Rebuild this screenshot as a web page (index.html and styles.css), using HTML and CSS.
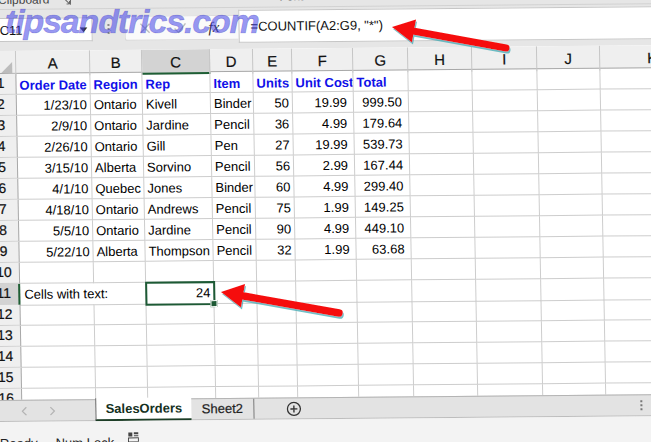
FILE: index.html
```html
<!DOCTYPE html>
<html>
<head>
<meta charset="utf-8">
<title>SalesOrders</title>
<link rel="stylesheet" href="styles.css">
</head>
<body>
<div class="app">
  <div class="ribbon">
    <span class="rb-clip">Clipboard</span>
    <svg class="rb-launch" width="8" height="8" viewBox="0 0 8 8"><path d="M0.5 0.5h7v7" fill="none" stroke="#666"/><path d="M1.5 1.5l5 5M3.5 6.5h3v-3" fill="none" stroke="#666"/></svg>
    <span class="rb-font">Font</span>
  </div>
  <div class="fbar">
    <div class="namebox"><span class="nb-text">C11</span><svg class="nb-dd" width="8" height="5" viewBox="0 0 8 5"><path d="M0 0h8L4 5z" fill="#333"/></svg></div>
    <div class="grip"><i></i><i></i><i></i></div>
    <div class="fbtns">
      <svg width="11" height="11" viewBox="0 0 11 11"><path d="M1 1l9 9M10 1l-9 9" stroke="#bdbdbd" stroke-width="1.4"/></svg>
      <svg width="13" height="11" viewBox="0 0 13 11"><path d="M1 6l4 4 7-9" fill="none" stroke="#bdbdbd" stroke-width="1.4"/></svg>
      <span class="fx">fx</span>
    </div>
    <div class="finput">=COUNTIF(A2:G9, "*")</div>
  </div>
  <div class="sheet">
    <div class="row hdr"><div class="corner"></div><div class="ch">A</div><div class="ch">B</div><div class="ch on">C</div><div class="ch">D</div><div class="ch">E</div><div class="ch">F</div><div class="ch">G</div><div class="ch">H</div><div class="ch">I</div><div class="ch">J</div><div class="ch">K</div></div>
    <div class="row"><div class="rh">1</div><div class="c t">Order Date</div><div class="c t">Region</div><div class="c t">Rep</div><div class="c t">Item</div><div class="c t">Units</div><div class="c t">Unit Cost</div><div class="c t">Total</div><div class="c"></div><div class="c"></div><div class="c"></div><div class="c"></div></div>
    <div class="row"><div class="rh">2</div><div class="c r">1/23/10</div><div class="c">Ontario</div><div class="c">Kivell</div><div class="c">Binder</div><div class="c r">50</div><div class="c r6">19.99</div><div class="c r6">999.50</div><div class="c"></div><div class="c"></div><div class="c"></div><div class="c"></div></div>
    <div class="row"><div class="rh">3</div><div class="c r">2/9/10</div><div class="c">Ontario</div><div class="c">Jardine</div><div class="c">Pencil</div><div class="c r">36</div><div class="c r6">4.99</div><div class="c r6">179.64</div><div class="c"></div><div class="c"></div><div class="c"></div><div class="c"></div></div>
    <div class="row"><div class="rh">4</div><div class="c r">2/26/10</div><div class="c">Ontario</div><div class="c">Gill</div><div class="c">Pen</div><div class="c r">27</div><div class="c r6">19.99</div><div class="c r6">539.73</div><div class="c"></div><div class="c"></div><div class="c"></div><div class="c"></div></div>
    <div class="row"><div class="rh">5</div><div class="c r">3/15/10</div><div class="c">Alberta</div><div class="c">Sorvino</div><div class="c">Pencil</div><div class="c r">56</div><div class="c r6">2.99</div><div class="c r6">167.44</div><div class="c"></div><div class="c"></div><div class="c"></div><div class="c"></div></div>
    <div class="row"><div class="rh">6</div><div class="c r">4/1/10</div><div class="c">Quebec</div><div class="c">Jones</div><div class="c">Binder</div><div class="c r">60</div><div class="c r6">4.99</div><div class="c r6">299.40</div><div class="c"></div><div class="c"></div><div class="c"></div><div class="c"></div></div>
    <div class="row"><div class="rh">7</div><div class="c r">4/18/10</div><div class="c">Ontario</div><div class="c">Andrews</div><div class="c">Pencil</div><div class="c r">75</div><div class="c r6">1.99</div><div class="c r6">149.25</div><div class="c"></div><div class="c"></div><div class="c"></div><div class="c"></div></div>
    <div class="row"><div class="rh">8</div><div class="c r">5/5/10</div><div class="c">Ontario</div><div class="c">Jardine</div><div class="c">Pencil</div><div class="c r">90</div><div class="c r6">4.99</div><div class="c r6">449.10</div><div class="c"></div><div class="c"></div><div class="c"></div><div class="c"></div></div>
    <div class="row"><div class="rh">9</div><div class="c r">5/22/10</div><div class="c">Alberta</div><div class="c">Thompson</div><div class="c">Pencil</div><div class="c r">32</div><div class="c r6">1.99</div><div class="c r6">63.68</div><div class="c"></div><div class="c"></div><div class="c"></div><div class="c"></div></div>
    <div class="row"><div class="rh">10</div><div class="c"></div><div class="c"></div><div class="c"></div><div class="c"></div><div class="c"></div><div class="c"></div><div class="c"></div><div class="c"></div><div class="c"></div><div class="c"></div><div class="c"></div></div>
    <div class="row"><div class="rh on">11</div><div class="c spill">Cells with text:</div><div class="c"></div><div class="c r sel">24</div><div class="c"></div><div class="c"></div><div class="c"></div><div class="c"></div><div class="c"></div><div class="c"></div><div class="c"></div><div class="c"></div></div>
    <div class="row"><div class="rh">12</div><div class="c"></div><div class="c"></div><div class="c"></div><div class="c"></div><div class="c"></div><div class="c"></div><div class="c"></div><div class="c"></div><div class="c"></div><div class="c"></div><div class="c"></div></div>
    <div class="row"><div class="rh">13</div><div class="c"></div><div class="c"></div><div class="c"></div><div class="c"></div><div class="c"></div><div class="c"></div><div class="c"></div><div class="c"></div><div class="c"></div><div class="c"></div><div class="c"></div></div>
    <div class="row"><div class="rh">14</div><div class="c"></div><div class="c"></div><div class="c"></div><div class="c"></div><div class="c"></div><div class="c"></div><div class="c"></div><div class="c"></div><div class="c"></div><div class="c"></div><div class="c"></div></div>
    <div class="row"><div class="rh">15</div><div class="c"></div><div class="c"></div><div class="c"></div><div class="c"></div><div class="c"></div><div class="c"></div><div class="c"></div><div class="c"></div><div class="c"></div><div class="c"></div><div class="c"></div></div>
    <div class="row"><div class="rh">16</div><div class="c"></div><div class="c"></div><div class="c"></div><div class="c"></div><div class="c"></div><div class="c"></div><div class="c"></div><div class="c"></div><div class="c"></div><div class="c"></div><div class="c"></div></div>
  </div>
  <div class="tabbar">
    <div class="nav">
      <svg width="6" height="9" viewBox="0 0 6 9"><path d="M5 0.5L1 4.5 5 8.5" fill="none" stroke="#b5b5b5" stroke-width="1.3"/></svg>
      <svg width="6" height="9" viewBox="0 0 6 9"><path d="M1 0.5L5 4.5 1 8.5" fill="none" stroke="#b5b5b5" stroke-width="1.3"/></svg>
    </div>
    <div class="tab active">SalesOrders</div>
    <div class="tab">Sheet2</div>
    <div class="add"><svg width="15" height="15" viewBox="0 0 15 15"><circle cx="7.5" cy="7.5" r="6.5" fill="none" stroke="#333" stroke-width="1.3"/><path d="M7.5 4v7M4 7.5h7" stroke="#333" stroke-width="1.4"/></svg></div>
    <div class="tb-fill"></div>
    <div class="vdots"><i></i><i></i><i></i></div>
    <div class="hscroll"></div>
  </div>
  <div class="status">
    <span class="st-ready">Ready</span>
    <span class="st-num">Num Lock</span>
    <svg class="st-icon" width="11" height="10" viewBox="0 0 11 10"><rect x="0.5" y="0.5" width="4" height="4" fill="#444"/><rect x="6" y="0.5" width="4.5" height="2" fill="#444"/><rect x="6" y="3.5" width="4.5" height="1" fill="#444"/><rect x="0.5" y="6" width="10" height="4" fill="none" stroke="#444"/></svg>
    <span class="st-fill"></span>
    <span class="st-view"></span>
  </div>
</div>
<div class="watermark">tipsandtrics.com</div>
<svg class="arrows" width="651" height="442" viewBox="0 0 651 442">
  <defs>
    <filter id="sh" x="-10%" y="-30%" width="120%" height="160%">
      <feDropShadow dx="1" dy="2" stdDeviation="0.7" flood-color="#3fa9b3" flood-opacity="0.75"/>
    </filter>
  </defs>
  <g filter="url(#sh)">
    <line x1="506" y1="48" x2="410" y2="30.5" stroke="#f5110f" stroke-width="7" stroke-linecap="round"/>
    <polygon points="392,27 416,19.5 412,42.5" fill="#f5110f"/>
    <line x1="339" y1="313" x2="242" y2="295.8" stroke="#f5110f" stroke-width="7.5" stroke-linecap="round"/>
    <polygon points="221,292 245,284 241,307.5" fill="#f5110f"/>
  </g>
</svg>
</body>
</html>
```

FILE: styles.css
```css
html, body {
  margin: 0;
  padding: 0;
}
body {
  width: 651px;
  height: 442px;
  overflow: hidden;
  position: relative;
  background: #e6e6e6;
  font-family: "Liberation Sans", Arial, sans-serif;
}

.app {
  margin-left: -16px;
  width: 720px;
  height: 470px;
  transform-origin: 16px 0;
  transform: matrix(1, -0.009, 0.018, 1, 0, 0);
  background: #e6e6e6;
  display: flex;
  flex-direction: column;
}

/* ribbon remnant */
.ribbon {
  height: 10px;
  overflow: hidden;
  display: flex;
  align-items: flex-start;
  font-size: 12px;
  color: #444;
  border-bottom: 1px solid #d2d2d2;
  box-sizing: border-box;
}
.rb-clip {
  margin-left: 14px;
  margin-top: -8px;
  line-height: 16px;
}
.rb-launch {
  margin-left: 14px;
  margin-top: -2px;
}
.rb-font {
  margin-left: 208px;
  margin-top: -9px;
  line-height: 16px;
}

/* formula bar */
.fbar {
  height: 41px;
  display: flex;
  align-items: flex-start;
}
.namebox {
  margin-top: 8px;
  width: 108px;
  height: 24px;
  box-sizing: border-box;
  background: #fff;
  border: 1px solid #c6c6c6;
  border-left: none;
  display: flex;
  align-items: center;
  font-size: 13px;
  color: #111;
}
.nb-text {
  margin-left: 15px;
}
.nb-dd {
  margin-left: auto;
  margin-right: 4px;
}
.grip {
  width: 32px;
  margin-top: 15px;
  display: flex;
  flex-direction: column;
  align-items: center;
  gap: 2px;
}
.grip i {
  width: 2px;
  height: 2px;
  background: #8a8a8a;
}
.fbtns {
  margin-top: 7px;
  width: 114px;
  height: 25px;
  box-sizing: border-box;
  background: #fafafa;
  border: 1px solid #d8d8d8;
  border-right: none;
  border-radius: 3px 0 0 3px;
  display: flex;
  align-items: center;
  padding-left: 14px;
  gap: 23px;
}
.fx {
  font-family: "Liberation Serif", serif;
  font-style: italic;
  font-size: 15px;
  color: #333;
  margin-left: -1px;
}
.finput {
  margin-top: 2px;
  flex: 1;
  height: 33px;
  box-sizing: border-box;
  background: #fff;
  border: 1px solid #c6c6c6;
  border-right: none;
  font-size: 13px;
  line-height: 20px;
  padding: 6px 0 0 11px;
  color: #111;
}

/* sheet */
.sheet {
  height: 349px;
  overflow: hidden;
  background: #fff;
}
.row {
  display: grid;
  grid-template-columns: 31px 74px 52px 68px 43px 39px 61px 55px 64px 65px 63px 105px;
  height: 21px;
}
.row.hdr {
  height: 23px;
  background: #efefef;
  border-bottom: 1px solid #a8a8a8;
  box-sizing: border-box;
}
.corner {
  position: relative;
  border-right: 1px solid #c8c8c8;
}
.corner::after {
  content: "";
  position: absolute;
  right: 3px;
  bottom: 3px;
  width: 0;
  height: 0;
  border-left: 11px solid transparent;
  border-bottom: 11px solid #bcbcbc;
}
.ch {
  border-right: 1px solid #c6c6c6;
  text-align: center;
  font-size: 15px;
  line-height: 20px;
  padding-top: 3px;
  color: #111;
  box-sizing: border-box;
  -webkit-text-stroke: 0.2px #111;
}
.ch.on {
  background: #d3d3d3;
  border-bottom: 2px solid #1e5e34;
}
.rh {
  background: #efefef;
  border-right: 1px solid #a8a8a8;
  border-bottom: 1px solid #d0d0d0;
  box-sizing: border-box;
  text-align: center;
  font-size: 14px;
  line-height: 19px;
  color: #111;
  -webkit-text-stroke: 0.2px #111;
}
.rh.on {
  background: #d3d3d3;
  border-right: 2px solid #1e5e34;
}
.c {
  border-right: 1px solid #cdcdcd;
  border-bottom: 1px solid #cdcdcd;
  box-sizing: border-box;
  font-size: 13px;
  line-height: 20px;
  padding: 1px 2px 0 3px;
  white-space: nowrap;
  overflow: hidden;
  color: #000;
}
.c.t {
  color: #1010e8;
  font-weight: bold;
  padding-top: 2px;
}
.c.r {
  text-align: right;
  padding-right: 3px;
}
.c.r6 {
  text-align: right;
  padding-right: 6px;
}
.c.spill {
  overflow: visible;
  border-right: none;
  padding-left: 4px;
}
.c.sel {
  position: relative;
  overflow: visible;
  outline: 2px solid #1d5a35;
  outline-offset: -1px;
  z-index: 2;
}
.c.sel::after {
  content: "";
  position: absolute;
  right: -4px;
  bottom: -4px;
  width: 5px;
  height: 5px;
  background: #1d5a35;
  border: 1px solid #fff;
}

/* sheet tabs */
.tabbar {
  height: 22px;
  display: flex;
  background: #e3e3e3;
  border-top: 1px solid #b4b4b4;
  border-bottom: 1px solid #bdbdbd;
  box-sizing: border-box;
}
.nav {
  width: 104px;
  display: flex;
  align-items: center;
  padding-left: 30px;
  gap: 22px;
  box-sizing: border-box;
}
.tab {
  width: 63px;
  font-size: 13px;
  line-height: 20px;
  text-align: center;
  color: #222;
  border-right: 1px solid #7a7a7a;
  box-sizing: border-box;
  -webkit-text-stroke: 0.2px #222;
}
.tab.active {
  width: 96px;
  margin-top: -2px;
  height: 23px;
  background: #fff;
  border-left: 1px solid #666;
  border-right: none;
  border-bottom: 2px solid #1c3d26;
  font-weight: bold;
  color: #14301e;
  line-height: 22px;
  -webkit-text-stroke: 0;
}
.add {
  width: 78px;
  display: flex;
  align-items: center;
  justify-content: center;
}
.tb-fill {
  flex: 1;
}
.vdots {
  width: 16px;
  margin-right: 2px;
  display: flex;
  flex-direction: column;
  align-items: center;
  justify-content: center;
  gap: 2px;
}
.vdots i {
  width: 2px;
  height: 2px;
  background: #777;
}
.hscroll {
  width: 60px;
  margin-top: 2px;
  height: 16px;
  border: 1px solid #999;
  border-right: none;
  background: #f2f2f2;
  box-sizing: border-box;
}

/* status bar */
.status {
  flex: 1;
  background: #f3f3f3;
  display: flex;
  align-items: flex-start;
  font-size: 13px;
  color: #222;
  padding-top: 14px;
}
.st-ready {
  margin-left: 8px;
}
.st-num {
  margin-left: 18px;
}
.st-icon {
  margin-left: 14px;
  margin-top: -3px;
}
.st-fill {
  flex: 1;
}
.st-view {
  width: 60px;
  height: 10px;
  margin-top: 2px;
  border-top: 2px solid #235b37;
  background: #e9e9e9;
}

/* overlays */
.watermark {
  position: absolute;
  left: 5px;
  top: 4px;
  font-size: 34px;
  line-height: 34px;
  font-weight: bold;
  font-style: italic;
  letter-spacing: -1.15px;
  color: rgba(62, 62, 232, 0.55);
  -webkit-text-stroke: 0.6px rgba(40, 40, 170, 0.35);
  white-space: nowrap;
  pointer-events: none;
}
.arrows {
  position: absolute;
  left: 0;
  top: 0;
  pointer-events: none;
}
```
